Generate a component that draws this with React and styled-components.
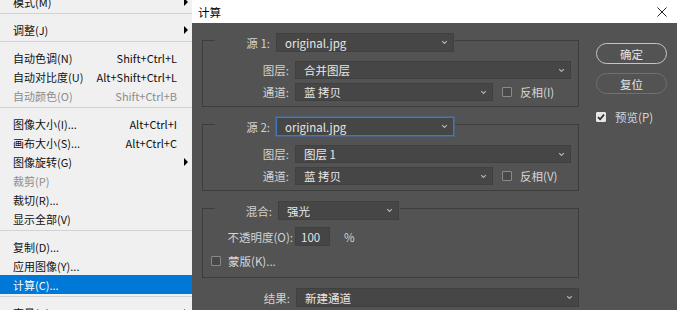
import React from "react";
import styled, { createGlobalStyle } from "styled-components";

const Global = createGlobalStyle`
  html, body { margin: 0; padding: 0; background: #535353; }
  body { font-family: "Noto Sans CJK SC", "Noto Sans", sans-serif; }
  * { box-sizing: border-box; }
`;

const Screen = styled.div`
  display: flex;
  width: 677px;
  height: 310px;
  overflow: hidden;
`;

/* ---------- Menu ---------- */
const Menu = styled.div`
  width: 192px;
  flex: none;
  background: #f0f0f0;
  display: flex;
  flex-direction: column;
  font-size: 11px;
  color: #111;
  & > :first-child { margin-top: -8px; }
`;

const MenuItem = styled.div`
  height: 19px;
  flex: none;
  display: flex;
  align-items: center;
  padding-left: 13px;
  background: ${(p) => (p.$active ? "#0078d7" : "transparent")};
  color: ${(p) => (p.$active ? "#fff" : p.$disabled ? "#8c8c8c" : "#111")};
  white-space: nowrap;
`;

const ItemLabel = styled.span`
  flex: 1;
`;

const Shortcut = styled.span``;

const ArrowSlot = styled.span`
  width: 15px;
  flex: none;
  display: flex;
  justify-content: center;
  align-items: center;
`;

const Arrow = styled.span`
  width: 0;
  height: 0;
  border-left: 4px solid #000;
  border-top: 4px solid transparent;
  border-bottom: 4px solid transparent;
  margin-left: 2px;
`;

const Separator = styled.div`
  flex: none;
  height: 1px;
  margin: 2px 0 6px;
  background: #d2d2d2;
`;

/* ---------- Dialog ---------- */
const Dialog = styled.div`
  flex: 1;
  display: flex;
  flex-direction: column;
  min-width: 0;
`;

const TitleBar = styled.div`
  height: 23px;
  flex: none;
  background: #fff;
  display: flex;
  align-items: center;
  justify-content: space-between;
  padding: 0 10px 0 6px;
  font-size: 11.5px;
  color: #000;
`;

const Body = styled.div`
  flex: 1;
  background: #535353;
  display: flex;
  gap: 17px;
  padding: 6px 0 0 10px;
  color: #d4d4d4;
  font-size: 11.5px;
`;

const LeftCol = styled.div`
  width: 377px;
  flex: none;
  display: flex;
  flex-direction: column;
  gap: 6px;
`;

const Group = styled.fieldset`
  margin: 0;
  min-width: 0;
  border: 1px solid #3d3d3d;
  padding: ${(p) => p.$pt}px 7px ${(p) => p.$pb}px 8px;
  display: flex;
  flex-direction: column;
  gap: ${(p) => p.$gap}px;
`;

const Legend = styled.legend`
  margin: 0 0 0 4px;
  padding: 4px 1px 0 0;
  display: flex;
  align-items: center;
  gap: 6px;
`;

const Label = styled.span`
  width: ${(p) => p.$w}px;
  flex: none;
  text-align: right;
  white-space: nowrap;
  color: #d2d2d2;
`;

const Row = styled.div`
  display: flex;
  align-items: center;
  gap: ${(p) => p.$gap ?? 6}px;
  height: ${(p) => p.$h ?? 18}px;
`;

const Select = styled.div`
  height: ${(p) => p.$h ?? 18}px;
  width: ${(p) => (p.$w ? `${p.$w}px` : "auto")};
  flex: ${(p) => (p.$w ? "none" : 1)};
  background: #464646;
  border: 1px solid ${(p) => (p.$focus ? "#4576bd" : "#404040")};
  box-shadow: ${(p) => (p.$focus ? "0 0 0 1px rgba(69,118,189,0.45)" : "none")};
  display: flex;
  align-items: center;
  padding: 0 5px 0 8px;
  color: #e6e6e6;
  white-space: nowrap;
`;

const SelectText = styled.span`
  flex: 1;
`;

const Input = styled.div`
  width: 35px;
  height: 19px;
  flex: none;
  background: #454545;
  border: 1px solid #404040;
  display: flex;
  align-items: center;
  padding-left: 5px;
  color: #e6e6e6;
`;

const Percent = styled.span`
  margin-left: 12px;
  color: #d2d2d2;
`;

const Box = styled.span`
  width: 10px;
  height: 10px;
  flex: none;
  border: 1px solid ${(p) => (p.$checked ? "#e6e6e6" : "#8a8a8a")};
  background: ${(p) => (p.$checked ? "#e6e6e6" : "#494949")};
  border-radius: 1px;
  display: flex;
  align-items: center;
  justify-content: center;
  margin-left: ${(p) => p.$ml ?? 0}px;
`;

const CheckText = styled.span`
  color: #d6d6d6;
  white-space: nowrap;
  margin-left: ${(p) => p.$ml ?? 0}px;
`;

const ResultRow = styled.div`
  margin-top: 4px;
  display: flex;
  align-items: center;
  gap: 6px;
  height: 19px;
`;

const RightCol = styled.div`
  width: 71px;
  flex: none;
  display: flex;
  flex-direction: column;
  gap: 9px;
  padding-top: 14px;
`;

const Button = styled.div`
  height: 21px;
  border-radius: 11px;
  border: 1.5px solid ${(p) => (p.$primary ? "#c6c6c6" : "#707070")};
  display: flex;
  align-items: center;
  justify-content: center;
  color: #e6e6e6;
`;

const PreviewRow = styled.div`
  margin-top: 7px;
  display: flex;
  align-items: center;
  gap: 9px;
  height: 14px;
`;

const Chevron = () => (
  <svg width="7" height="5" viewBox="0 0 7 5">
    <path d="M1.2 1.2 L3.5 3.5 L5.8 1.2" fill="none" stroke="#b8b8b8" strokeWidth="1.1" />
  </svg>
);

const Check = () => (
  <svg width="8" height="8" viewBox="0 0 8 8">
    <path d="M1 4.2 L3.1 6.2 L7 1.6" fill="none" stroke="#2c2c2c" strokeWidth="1.7" />
  </svg>
);

const CloseIcon = () => (
  <svg width="10" height="10" viewBox="0 0 10 10">
    <path d="M0.5 0.5 L9.5 9.5 M9.5 0.5 L0.5 9.5" stroke="#222" strokeWidth="1" />
  </svg>
);

const menu = [
  { label: "模式(M)", arrow: true },
  { sep: true },
  { label: "调整(J)", arrow: true },
  { sep: true },
  { label: "自动色调(N)", sc: "Shift+Ctrl+L" },
  { label: "自动对比度(U)", sc: "Alt+Shift+Ctrl+L" },
  { label: "自动颜色(O)", sc: "Shift+Ctrl+B", disabled: true },
  { sep: true },
  { label: "图像大小(I)...", sc: "Alt+Ctrl+I" },
  { label: "画布大小(S)...", sc: "Alt+Ctrl+C" },
  { label: "图像旋转(G)", arrow: true },
  { label: "裁剪(P)", disabled: true },
  { label: "裁切(R)..." },
  { label: "显示全部(V)" },
  { sep: true },
  { label: "复制(D)..." },
  { label: "应用图像(Y)..." },
  { label: "计算(C)...", active: true },
  { sep: true },
  { label: "变量(B)", arrow: true },
];

function SelectBox({ text, w, h, focus }) {
  return (
    <Select $w={w} $h={h} $focus={focus}>
      <SelectText>{text}</SelectText>
      <Chevron />
    </Select>
  );
}

function SourceGroup({ n, layer, inv }) {
  return (
    <Group $pt={9} $pb={5} $gap={4}>
      <Legend>
        <Label $w={55}>源 {n}:</Label>
        <SelectBox text="original.jpg" w={178} h={19} focus={n === 2} />
      </Legend>
      <Row>
        <Label $w={78}>图层:</Label>
        <SelectBox text={layer} />
      </Row>
      <Row>
        <Label $w={78}>通道:</Label>
        <SelectBox text="蓝 拷贝" w={198} />
        <Box $ml={3} />
        <CheckText $ml={2}>反相({inv})</CheckText>
      </Row>
    </Group>
  );
}

export default function App() {
  return (
    <Screen>
      <Global />
      <Menu>
        {menu.map((m, i) =>
          m.sep ? (
            <Separator key={i} />
          ) : (
            <MenuItem key={i} $active={m.active} $disabled={m.disabled}>
              <ItemLabel>{m.label}</ItemLabel>
              {m.sc && <Shortcut>{m.sc}</Shortcut>}
              <ArrowSlot>{m.arrow && <Arrow />}</ArrowSlot>
            </MenuItem>
          )
        )}
      </Menu>
      <Dialog>
        <TitleBar>
          <span>计算</span>
          <CloseIcon />
        </TitleBar>
        <Body>
          <LeftCol>
            <SourceGroup n={1} layer="合并图层" inv="I" />
            <SourceGroup n={2} layer="图层 1" inv="V" />
            <Group $pt={7} $pb={7} $gap={5}>
              <Legend>
                <Label $w={57}>混合:</Label>
                <SelectBox text="强光" w={121} h={19} />
              </Legend>
              <Row $gap={2} $h={19}>
                <Label $w={82}>不透明度(O):</Label>
                <Input>100</Input>
                <Percent>%</Percent>
              </Row>
              <Row $gap={7} $h={19}>
                <Box />
                <CheckText>蒙版(K)...</CheckText>
              </Row>
            </Group>
            <ResultRow>
              <Label $w={88}>结果:</Label>
              <SelectBox text="新建通道" h={19} />
            </ResultRow>
          </LeftCol>
          <RightCol>
            <Button $primary>确定</Button>
            <Button>复位</Button>
            <PreviewRow>
              <Box $checked>
                <Check />
              </Box>
              <CheckText>预览(P)</CheckText>
            </PreviewRow>
          </RightCol>
        </Body>
      </Dialog>
    </Screen>
  );
}
